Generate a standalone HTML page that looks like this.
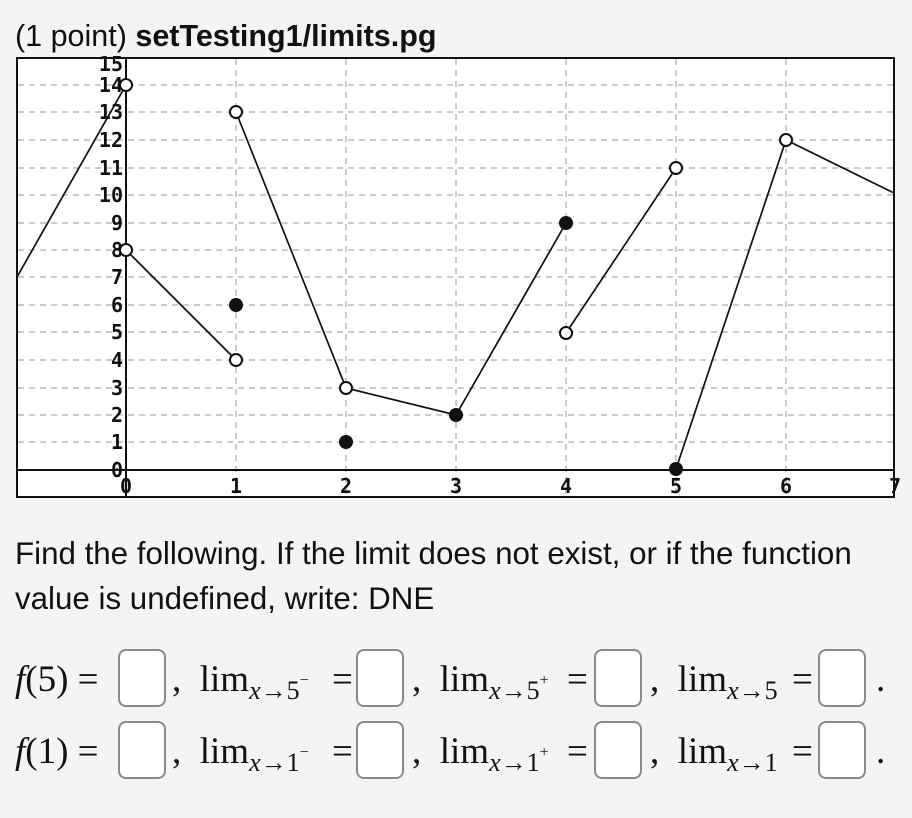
<!DOCTYPE html>
<html><head><meta charset="utf-8"><style>
body{margin:0;background:#f4f4f4;width:912px;height:818px;position:relative;overflow:hidden;font-family:"Liberation Sans",Arial,sans-serif;color:#111}
.a{position:absolute;white-space:nowrap}
.t{font-family:"Liberation Serif","Times New Roman",serif;font-size:37px;line-height:40px}
.box{position:absolute;width:48px;height:58px;border:2px solid #8a8a8a;border-radius:8px;background:#fff;box-sizing:border-box}
sub{font-size:26px;vertical-align:-8px}
sup{font-size:16px;vertical-align:14px}
</style></head><body>
<div class="a" style="left:15px;top:19px;font-size:30.5px">(1 point) <b>setTesting1/limits.pg</b></div>
<svg class="a" style="left:0;top:0" width="912" height="510">
<rect x="17" y="58" width="877" height="439" fill="#fff" stroke="#111" stroke-width="2"/>
<g stroke="#bbb" stroke-width="1.5" stroke-dasharray="6,5">
<line x1="18" x2="893" y1="85" y2="85"/><line x1="18" x2="893" y1="112" y2="112"/><line x1="18" x2="893" y1="140" y2="140"/><line x1="18" x2="893" y1="168" y2="168"/><line x1="18" x2="893" y1="195" y2="195"/><line x1="18" x2="893" y1="223" y2="223"/><line x1="18" x2="893" y1="250" y2="250"/><line x1="18" x2="893" y1="277" y2="277"/><line x1="18" x2="893" y1="305" y2="305"/><line x1="18" x2="893" y1="332" y2="332"/><line x1="18" x2="893" y1="360" y2="360"/><line x1="18" x2="893" y1="388" y2="388"/><line x1="18" x2="893" y1="415" y2="415"/><line x1="18" x2="893" y1="442" y2="442"/>
<line y1="59" y2="496" x1="236" x2="236"/><line y1="59" y2="496" x1="346" x2="346"/><line y1="59" y2="496" x1="456" x2="456"/><line y1="59" y2="496" x1="566" x2="566"/><line y1="59" y2="496" x1="676" x2="676"/><line y1="59" y2="496" x1="786" x2="786"/>
</g>
<line x1="18" x2="893" y1="470" y2="470" stroke="#111" stroke-width="2"/>
<line x1="126" x2="126" y1="59" y2="496" stroke="#111" stroke-width="2"/>
<g font-family="DejaVu Sans Mono,monospace" font-weight="bold" font-size="20" fill="#111" text-anchor="end">
<text x="123" y="71">15</text><text x="123" y="92">14</text><text x="123" y="119">13</text><text x="123" y="147">12</text><text x="123" y="175">11</text><text x="123" y="202">10</text><text x="123" y="230">9</text><text x="123" y="257">8</text><text x="123" y="284">7</text><text x="123" y="312">6</text><text x="123" y="339">5</text><text x="123" y="367">4</text><text x="123" y="395">3</text><text x="123" y="422">2</text><text x="123" y="449">1</text><text x="123" y="477">0</text>
</g>
<g font-family="DejaVu Sans Mono,monospace" font-weight="bold" font-size="20" fill="#111" text-anchor="middle">
<text x="126" y="493">0</text><text x="236" y="493">1</text><text x="346" y="493">2</text><text x="456" y="493">3</text><text x="566" y="493">4</text><text x="676" y="493">5</text><text x="786" y="493">6</text><text x="895" y="493">7</text>
</g>
<g stroke="#111" stroke-width="1.7" fill="none">
<polyline points="17,277 126,85"/><polyline points="126,250 236,360"/><polyline points="236,112 346,388 456,415 566,223"/><polyline points="566,333 676,168"/><polyline points="676,469 786,140 894,193"/>
</g>
<g stroke="#111" stroke-width="2" fill="#fff">
<circle cx="126" cy="85" r="6"/><circle cx="126" cy="250" r="6"/><circle cx="236" cy="360" r="6"/><circle cx="236" cy="112" r="6"/><circle cx="346" cy="388" r="6"/><circle cx="566" cy="333" r="6"/><circle cx="676" cy="168" r="6"/><circle cx="786" cy="140" r="6"/>
</g>
<g fill="#111"><circle cx="236" cy="305" r="7"/><circle cx="346" cy="442" r="7"/><circle cx="456" cy="415" r="7"/><circle cx="566" cy="223" r="7"/><circle cx="676" cy="469" r="7"/></g>
</svg>
<div class="a" style="left:15px;top:531px;font-size:31.3px;line-height:45px">Find the following. If the limit does not exist, or if the function<br>value is undefined, write: DNE</div>

<div class="a t" style="left:15px;top:660px"><i>f</i>(5) =</div>
<div class="box" style="left:118px;top:649px"></div>
<div class="a t" style="left:172px;top:660px">, &nbsp;lim<sub><i>x</i>→5<sup>−</sup></sub></div>
<div class="a t" style="left:332px;top:660px">=</div>
<div class="box" style="left:356px;top:649px"></div>
<div class="a t" style="left:412px;top:660px">, &nbsp;lim<sub><i>x</i>→5<sup>+</sup></sub></div>
<div class="a t" style="left:567px;top:660px">=</div>
<div class="box" style="left:594px;top:649px"></div>
<div class="a t" style="left:650px;top:660px">, &nbsp;lim<sub><i>x</i>→5</sub></div>
<div class="a t" style="left:792px;top:660px">=</div>
<div class="box" style="left:818px;top:649px"></div>
<div class="a t" style="left:876px;top:660px">.</div>

<div class="a t" style="left:15px;top:732px"><i>f</i>(1) =</div>
<div class="box" style="left:118px;top:721px"></div>
<div class="a t" style="left:172px;top:732px">, &nbsp;lim<sub><i>x</i>→1<sup>−</sup></sub></div>
<div class="a t" style="left:332px;top:732px">=</div>
<div class="box" style="left:356px;top:721px"></div>
<div class="a t" style="left:412px;top:732px">, &nbsp;lim<sub><i>x</i>→1<sup>+</sup></sub></div>
<div class="a t" style="left:567px;top:732px">=</div>
<div class="box" style="left:594px;top:721px"></div>
<div class="a t" style="left:650px;top:732px">, &nbsp;lim<sub><i>x</i>→1</sub></div>
<div class="a t" style="left:792px;top:732px">=</div>
<div class="box" style="left:818px;top:721px"></div>
<div class="a t" style="left:876px;top:732px">.</div>
</body></html>
